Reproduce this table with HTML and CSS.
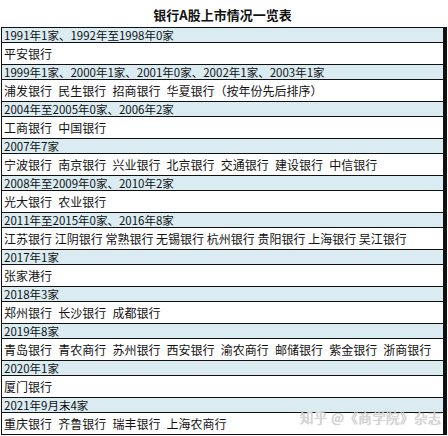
FILE: index.html
```html
<!DOCTYPE html>
<html lang="zh-CN">
<head>
<meta charset="utf-8">
<title>银行A股上市情况一览表</title>
<link rel="stylesheet" href="styles.css">
</head>
<body>
<div class="page">
  <h1 class="title">银行A股上市情况一览表</h1>
  <div class="list">
    <div class="row yr">1991年1家、1992年至1998年0家</div>
    <div class="row bk">平安银行</div>
    <div class="row yr">1999年1家、2000年1家、2001年0家、2002年1家、2003年1家</div>
    <div class="row bk wide">浦发银行 民生银行 招商银行 华夏银行（按年份先后排序）</div>
    <div class="row yr">2004年至2005年0家、2006年2家</div>
    <div class="row bk wide">工商银行 中国银行</div>
    <div class="row yr">2007年7家</div>
    <div class="row bk wide">宁波银行 南京银行 兴业银行 北京银行 交通银行 建设银行 中信银行</div>
    <div class="row yr">2008年至2009年0家、2010年2家</div>
    <div class="row bk wide">光大银行 农业银行</div>
    <div class="row yr">2011年至2015年0家、2016年8家</div>
    <div class="row bk">江苏银行 江阴银行 常熟银行 无锡银行 杭州银行 贵阳银行 上海银行 吴江银行</div>
    <div class="row yr">2017年1家</div>
    <div class="row bk">张家港行</div>
    <div class="row yr">2018年3家</div>
    <div class="row bk wide">郑州银行 长沙银行 成都银行</div>
    <div class="row yr">2019年8家</div>
    <div class="row bk wide">青岛银行 青农商行 苏州银行 西安银行 渝农商行 邮储银行 紫金银行 浙商银行</div>
    <div class="row yr">2020年1家</div>
    <div class="row bk">厦门银行</div>
    <div class="row yr">2021年9月末4家</div>
    <div class="row bk wide">重庆银行 齐鲁银行 瑞丰银行 上海农商行</div>
  </div>
  <div class="watermark">知乎 @《商学院》杂志</div>
</div>
</body>
</html>
```

FILE: styles.css
```css
html, body {
  margin: 0;
  padding: 0;
  background: #ffffff;
}

body {
  font-family: "Noto Sans CJK SC", "Noto Sans", sans-serif;
  color: #111111;
}

.page {
  position: relative;
  width: 448px;
  height: 436px;
  padding-left: 1px;
  box-sizing: border-box;
  overflow: hidden;
}

.title {
  margin: 0;
  width: 443px;
  height: 27px;
  padding-top: 3px;
  box-sizing: border-box;
  font-size: 13px;
  line-height: 24px;
  font-weight: bold;
  text-align: center;
  color: #111111;
}

.list {
  display: flex;
  flex-direction: column;
  width: 443px;
  box-sizing: border-box;
  border-left: 1px solid #111111;
  border-right: 1px solid #111111;
  border-bottom: 1px solid #111111;
  box-shadow: 3px 0 0 #111111;
}

.row {
  box-sizing: border-box;
  padding-left: 2px;
  border-top: 1px solid #111111;
  white-space: nowrap;
  overflow: hidden;
}

.yr {
  background: #daecf1;
  font-size: 11.5px;
  height: 15px;
  line-height: 13px;
  padding-top: 1px;
}

.bk {
  background: #ffffff;
  font-size: 12px;
  height: 22px;
  line-height: 21px;
}

.wide {
  word-spacing: 3.5px;
}

.watermark {
  position: absolute;
  left: 300px;
  top: 409px;
  font-size: 13.5px;
  line-height: 16px;
  letter-spacing: 0.4px;
  color: #d6d6d6;
  text-shadow: 0 0 1px #b4b4b4;
  white-space: nowrap;
}
```
